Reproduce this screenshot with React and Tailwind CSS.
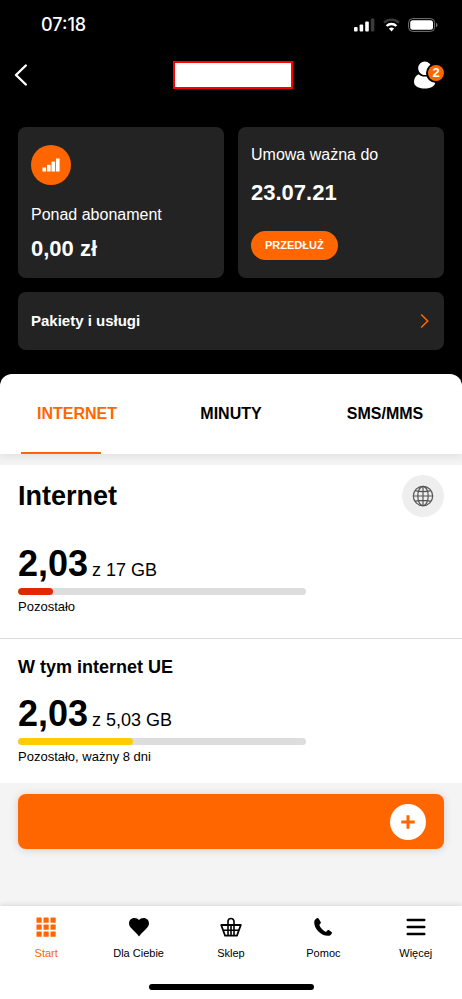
import React, { useState } from "react";

const usage = [
  { id: "total", title: "", left: "2,03", total: "z 17 GB", note: "Pozostało", percent: 12, color: "bg-[#e22800]" },
  { id: "ue", title: "W tym internet UE", left: "2,03", total: "z 5,03 GB", note: "Pozostało, ważny 8 dni", percent: 40, color: "bg-[#ffcc00]" },
];

const tabs = ["INTERNET", "MINUTY", "SMS/MMS"];

const StatusBar = () => (
  <div className="flex h-[50px] items-center justify-between pl-[41px] pr-6">
    <span className="font-['Inter',sans-serif] text-lg font-medium leading-6">07:18</span>
    <div className="flex items-center gap-2">
      <svg width="21" height="14" viewBox="0 0 21 14" fill="#fff">
        <rect x="0" y="9" width="3.6" height="4.5" rx="1" />
        <rect x="5.6" y="6.6" width="3.6" height="6.9" rx="1" />
        <rect x="11.2" y="3.6" width="3.6" height="9.9" rx="1" />
        <rect x="16.8" y="0.6" width="3.6" height="12.9" rx="1" fill="#3a3a3a" />
      </svg>
      <svg width="17" height="14" viewBox="0 0 17 14" fill="none">
        <path d="M1 4.7a10.8 10.8 0 0 1 15 0" stroke="#3a3a3a" strokeWidth="2.4" />
        <path d="M3.6 8a7 7 0 0 1 9.8 0" stroke="#fff" strokeWidth="2.4" />
        <path d="M5.9 10.6a3.8 3.8 0 0 1 5.2 0L8.5 13.5Z" fill="#fff" />
      </svg>
      <svg width="30" height="14" viewBox="0 0 30 14">
        <rect x="0.6" y="0.6" width="26" height="12.8" rx="4" fill="none" stroke="#757575" strokeWidth="1" />
        <rect x="2.2" y="2.2" width="22.8" height="9.6" rx="2.5" fill="#fff" />
        <path d="M28 4.8q1.6.7 1.6 2.200t-1.600 2.200z" fill="#757575" />
      </svg>
    </div>
  </div>
);

const GlobeIcon = () => (
  <svg width="22" height="22" viewBox="0 0 22 22" fill="none" stroke="#555" strokeWidth="1.2">
    <circle cx="11" cy="11" r="9.7" />
    <ellipse cx="11" cy="11" rx="5.2" ry="9.7" />
    <path d="M11 1.300v19.400M1.300 11h19.400M2.900 5.700q8.100 1.800 16.200 0M2.900 16.300q8.100-1.800 16.200 0" />
  </svg>
);

const GridIcon = () => (
  <svg width="20" height="20" viewBox="0 0 20 20" fill="currentColor">
    {[0.5, 7.5, 14.5].map((y) =>
      [0.5, 7.5, 14.5].map((x) => <rect key={`${x}-${y}`} x={x} y={y} width="5.2" height="5.2" rx="0.5" />)
    )}
  </svg>
);

const HeartIcon = () => (
  <svg width="22" height="20" viewBox="0 0 22 20" fill="currentColor">
    <path d="M11 19.500C9.400 17.200 7 14.900 4.300 12.300 2.300 10.400 1 8.700 1 6.300 1 3.200 3.300.900 6.300.900c2 0 3.700.9 4.700 2.100C12 1.800 13.700.9 15.700.9c3 0 5.300 2.300 5.300 5.400 0 2.400-1.300 4.100-3.300 6C15 14.900 12.600 17.200 11 19.500Z" />
  </svg>
);

const BasketIcon = () => (
  <svg width="22" height="20" viewBox="0 0 22 20" fill="none" stroke="currentColor" strokeWidth="1.8" strokeLinejoin="round">
    <path d="M1.200 8h19.600l-3.900 10.700H5.100Z" />
    <path d="M3.200 13.300h15.600M8 18.500V4.500a3 3 0 0 1 6 0v14M11 8v10.500" strokeWidth="1.6" />
  </svg>
);

const PhoneIcon = () => (
  <svg width="20" height="20" viewBox="0 0 20 20" fill="currentColor">
    <path d="M4 1.200c-1.300.6-2.800 1.900-2.800 4C1.200 12 8 18.800 14.900 18.800c2 0 3.300-1 4-2.600.2-.5.1-1-.4-1.300l-2.400-1.600c-.5-.4-1.200-.4-1.700.1l-1 1c-.4.400-.9.400-1.400.1-2.400-1.500-4.500-3.700-5.500-6-.2-.5-.1-.9.300-1.200l.7-.7c.4-.4.500-1 .2-1.500L5.700 1.700c-.3-.6-1-.8-1.700-.5Z" />
  </svg>
);

const MenuIcon = () => (
  <svg width="20" height="20" viewBox="0 0 20 20" stroke="currentColor" strokeWidth="2.4" strokeLinecap="round">
    <path d="M1.700 3h16.600M1.700 10h16.600M1.700 17h16.600" />
  </svg>
);

const navItems = [
  { label: "Start", Icon: GridIcon },
  { label: "Dla Ciebie", Icon: HeartIcon },
  { label: "Sklep", Icon: BasketIcon },
  { label: "Pomoc", Icon: PhoneIcon },
  { label: "Więcej", Icon: MenuIcon },
];

const UsageMeter = ({ item }) => (
  <div>
    <p className="flex items-baseline gap-1">
      <span className="text-4xl/10 font-bold">{item.left}</span>
      <span className="text-lg/6">{item.total}</span>
    </p>
    <div className="mt-1 h-[7px] w-72 overflow-hidden rounded-full bg-[#dddddd]">
      <div className={`h-full rounded-full ${item.color}`} style={{ width: `${item.percent}%` }} />
    </div>
    <p className="mt-0.5 text-[13px] leading-5">{item.note}</p>
  </div>
);

const App = () => {
  const [activeTab, setActiveTab] = useState("INTERNET");
  const [activeNav, setActiveNav] = useState("Start");

  return (
    <div className="flex min-h-screen flex-col bg-[#f4f4f4] font-['Liberation_Sans',Arial,sans-serif] text-black">
      <header className="bg-black pb-6 text-white">
        <StatusBar />

        <div className="flex h-[50px] items-center justify-between pl-3.5 pr-[18px]">
          <button type="button" aria-label="Wstecz" className="w-10">
            <svg width="14" height="22" viewBox="0 0 14 22" fill="none" stroke="#fff" strokeWidth="2.4" strokeLinecap="round" strokeLinejoin="round">
              <path d="M11.800 1.500 2 11l9.800 9.500" />
            </svg>
          </button>
          <div className="h-7 w-[120px] border-2 border-[#ff0000] bg-white" />
          <button type="button" aria-label="Konto" className="relative w-8">
            <svg width="26" height="28" viewBox="0 0 24 28" fill="#fff">
              <path d="M11.800.500a6.600 6.600 0 0 1 6.600 6.700c0 3.700-2.900 6.800-6.600 6.800s-6.600-3.100-6.600-6.800A6.600 6.600 0 0 1 11.800.500Z" />
              <path d="M5.600 13.200c1.500 1.500 3.600 2.400 6.200 2.400s4.700-.9 6.200-2.400c2.700 1.500 4.300 4.200 4.300 7.500 0 4.400-4.100 6.800-10.500 6.800S1 25.100 1 20.700c0-3.300 1.700-6 4.600-7.500Z" />
            </svg>
            <span className="absolute right-0 top-1 flex size-4 items-center justify-center rounded-full bg-[#ff6600] text-[13px] font-bold leading-4 ring-2 ring-black">
              2
            </span>
          </button>
        </div>

        <div className="grid grid-cols-2 gap-3.5 px-[18px] pt-[27px]">
          <div className="rounded-lg bg-[#232323] px-[13px] pb-[15px] pt-[18px]">
            <div className="flex size-10 items-center justify-center rounded-full bg-[#ff6600]">
              <svg width="18" height="14" viewBox="0 0 18 14" fill="#fff">
                <rect x="0.5" y="9.5" width="3.6" height="4" />
                <rect x="5" y="6.8" width="3.6" height="6.7" />
                <rect x="9.5" y="3.6" width="3.6" height="9.9" />
                <rect x="14" y="0.5" width="3.6" height="13" />
              </svg>
            </div>
            <p className="mt-[18px] text-base leading-6">Ponad abonament</p>
            <p className="mt-2 text-[22px] font-bold leading-7">0,00 zł</p>
          </div>

          <div className="rounded-lg bg-[#232323] px-[13px] pb-[15px] pt-4">
            <p className="text-base leading-6">Umowa ważna do</p>
            <p className="mt-3 text-[22px] font-bold leading-7">23.07.21</p>
            <button type="button" className="mt-6 block h-[29px] rounded-full bg-[#ff6600] px-3.5 text-[11px] font-bold">
              PRZEDŁUŻ
            </button>
          </div>

          <button type="button" className="col-span-2 flex h-[58px] items-center justify-between rounded-lg bg-[#232323] px-[13px] text-left">
            <span className="text-[15px] font-bold">Pakiety i usługi</span>
            <svg width="12" height="16" viewBox="0 0 12 16" fill="none" stroke="#ff6600" strokeWidth="1.6">
              <path d="m2.200 1.500 6.500 6.500-6.500 6.500" />
            </svg>
          </button>
        </div>
      </header>

      {/* tabs */}
      <div className="relative z-10 bg-black">
        <div className="grid grid-cols-3 rounded-t-xl bg-white shadow-[0_3px_8px_rgba(0,0,0,0.08)]">
          {tabs.map((tab) => (
            <button key={tab} type="button" onClick={() => setActiveTab(tab)} className="flex flex-col">
              <span className={`flex h-[78px] w-full items-center justify-center pt-0.5 text-base font-bold ${activeTab === tab ? "text-[#ff6600]" : ""}`}>
                {tab}
              </span>
              <span className={`ml-[21px] h-0.5 w-20 ${activeTab === tab ? "bg-[#ff6600]" : ""}`} />
            </button>
          ))}
        </div>
      </div>

      <main className="mt-[11px] flex-1">
        <section className="border-b border-[#dddddd] bg-white px-[18px] pb-[21px] pt-2.5">
          <div className="mb-[27px] flex items-center justify-between">
            <h1 className="text-[27px] font-bold leading-8">Internet</h1>
            <button type="button" aria-label="Sieć" className="flex size-[42px] items-center justify-center rounded-full bg-[#eeeeee]">
              <GlobeIcon />
            </button>
          </div>
          <UsageMeter item={usage[0]} />
        </section>

        <section className="bg-white px-[18px] pb-4 pt-4">
          <h2 className="mb-[15px] text-lg font-bold leading-6">{usage[1].title}</h2>
          <UsageMeter item={usage[1]} />
        </section>

        <div className="px-[18px] pb-6 pt-[11px]">
          <button
            type="button"
            aria-label="Dodaj"
            className="flex h-[55px] w-full items-center justify-end rounded-lg bg-[#ff6600] pr-[18px] shadow-[0_1px_8px_rgba(0,0,0,0.14)]"
          >
            <span className="flex size-9 items-center justify-center rounded-full bg-white">
              <svg width="14" height="14" viewBox="0 0 14 14" stroke="#ff6600" strokeWidth="3">
                <path d="M7 0.300v13.400M0.300 7h13.400" />
              </svg>
            </span>
          </button>
        </div>
      </main>

      {/* bottom navigation */}
      <nav className="bg-white pb-[9px] pt-[11px] shadow-[0_-1px_5px_rgba(0,0,0,0.12)]">
        <div className="grid grid-cols-5">
          {navItems.map(({ label, Icon }) => (
            <button
              key={label}
              type="button"
              onClick={() => setActiveNav(label)}
              className={`flex flex-col items-center gap-2 ${activeNav === label ? "text-[#ff6600]" : ""}`}
            >
              <Icon />
              <span className="text-[11px] leading-4">{label}</span>
            </button>
          ))}
        </div>
        <div className="mx-auto mt-[23px] h-1.5 w-[165px] rounded-full bg-black" />
      </nav>
    </div>
  );
};

export default App;
